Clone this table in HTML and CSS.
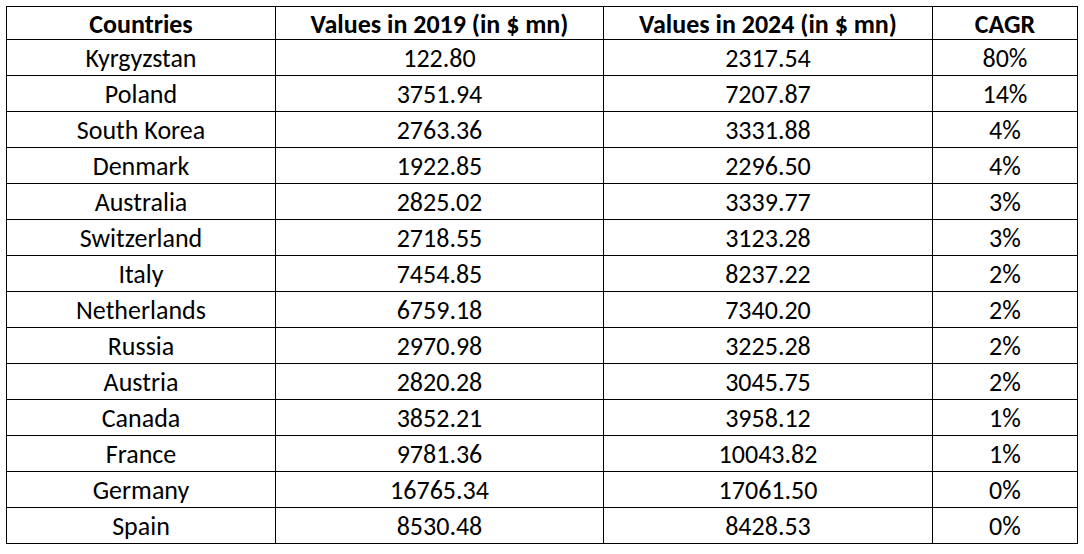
FILE: index.html
```html
<!DOCTYPE html>
<html>
<head>
<meta charset="utf-8">
<link rel="stylesheet" href="styles.css">
</head>
<body>
<table class="data">
  <colgroup>
    <col class="c1"><col class="c2"><col class="c3"><col class="c4">
  </colgroup>
  <thead>
    <tr><th>Countries</th><th>Values in 2019 (in $ mn)</th><th>Values in 2024 (in $ mn)</th><th>CAGR</th></tr>
  </thead>
  <tbody>
    <tr><td>Kyrgyzstan</td><td>122.80</td><td>2317.54</td><td>80%</td></tr>
    <tr><td>Poland</td><td>3751.94</td><td>7207.87</td><td>14%</td></tr>
    <tr><td>South Korea</td><td>2763.36</td><td>3331.88</td><td>4%</td></tr>
    <tr><td>Denmark</td><td>1922.85</td><td>2296.50</td><td>4%</td></tr>
    <tr><td>Australia</td><td>2825.02</td><td>3339.77</td><td>3%</td></tr>
    <tr><td>Switzerland</td><td>2718.55</td><td>3123.28</td><td>3%</td></tr>
    <tr><td>Italy</td><td>7454.85</td><td>8237.22</td><td>2%</td></tr>
    <tr><td>Netherlands</td><td>6759.18</td><td>7340.20</td><td>2%</td></tr>
    <tr><td>Russia</td><td>2970.98</td><td>3225.28</td><td>2%</td></tr>
    <tr><td>Austria</td><td>2820.28</td><td>3045.75</td><td>2%</td></tr>
    <tr><td>Canada</td><td>3852.21</td><td>3958.12</td><td>1%</td></tr>
    <tr><td>France</td><td>9781.36</td><td>10043.82</td><td>1%</td></tr>
    <tr><td>Germany</td><td>16765.34</td><td>17061.50</td><td>0%</td></tr>
    <tr><td>Spain</td><td>8530.48</td><td>8428.53</td><td>0%</td></tr>
  </tbody>
</table>
</body>
</html>
```
FILE: styles.css
```css
html, body {
  margin: 0;
  padding: 0;
  background: #ffffff;
}
body {
  padding: 6px 0 0 6px;
  font-family: Carlito, Calibri, Lato, "Liberation Sans", sans-serif;
  color: #000;
}
.data {
  border-collapse: collapse;
  table-layout: fixed;
  width: 1071px;
}
.c1 { width: 269px; }
.c2 { width: 328px; }
.c3 { width: 329px; }
.c4 { width: 145px; }
.data th, .data td {
  border: 1px solid #000;
  text-align: center;
  padding: 1px 0 0 0;
  font-size: 26px;
  line-height: 1;
}
.data th {
  font-weight: bold;
  height: 31px;
}
.data td {
  height: 34px;
}
```
